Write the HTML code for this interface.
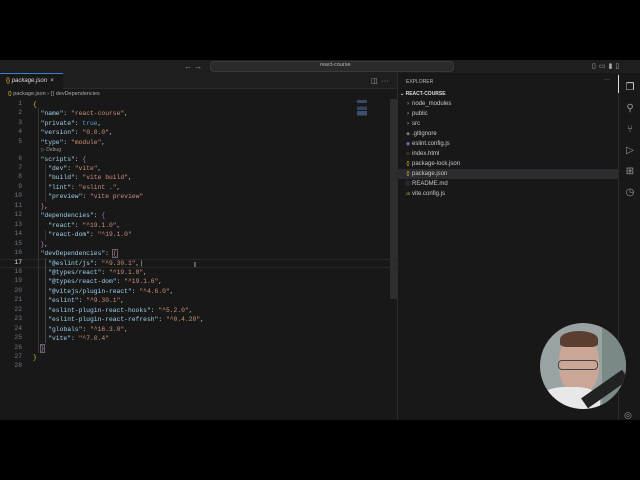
<!DOCTYPE html>
<html><head><meta charset="utf-8"><style>
*{margin:0;padding:0;box-sizing:border-box}
body{width:640px;height:480px;background:#000;position:relative;overflow:hidden;font-family:"Liberation Sans",sans-serif}
.abs{position:absolute}
.code{font-family:"Liberation Mono",monospace;font-size:6.33px;white-space:pre;color:#cccccc}
.k{color:#9fd0ea}.s{color:#ce9178}.b{color:#569cd6}.y{color:#e2c540}.p{color:#d070d0}
.ln{position:absolute;left:0;width:22px;text-align:right;font-family:"Liberation Mono",monospace;font-size:6.33px;color:#6e7681}
.row{position:absolute;left:33px;height:9.45px;line-height:9.45px}
.side{font-size:6px;color:#c8c8c8;position:absolute;left:412px;height:10px;line-height:10px}
.ic{position:absolute;left:405px;width:6px;height:10px;line-height:10px;font-size:5px;text-align:center}
</style></head><body>
<!-- title bar -->
<div class="abs" style="left:0;top:60px;width:640px;height:13px;background:#1e1e1e"></div>
<div class="abs" style="left:184px;top:62px;font-size:8px;color:#999">←&nbsp;→</div>
<div class="abs" style="left:210px;top:61px;width:244px;height:11px;background:#2a2a2a;border:1px solid #3a3a3a;border-radius:4px"></div>
<div class="abs" style="left:320px;top:62px;font-size:5.5px;color:#bbb">react-course</div>
<div class="abs" style="left:592px;top:62px;font-size:7px;color:#aaa;letter-spacing:3px">▯▭▮▯</div>
<!-- editor -->
<div class="abs" style="left:0;top:73px;width:397px;height:347px;background:#181818"></div>
<div class="abs" style="left:0;top:73px;width:397px;height:16px;background:#1e1e1e;border-bottom:1px solid #2a2a2a"></div>
<div class="abs" style="left:0;top:73px;width:63px;height:17px;background:#181818;border-top:1px solid #3b7fd4"></div>
<div class="abs" style="left:6px;top:78px;font-size:6px;color:#ddd"><span class="y">{}</span> <i>package.json</i> &nbsp;×</div>
<div class="abs" style="left:371px;top:77px;font-size:7px;color:#aaa">◫ &nbsp;···</div>
<div class="abs" style="left:8px;top:91px;font-size:5.5px;color:#aaa"><span class="y">{}</span> package.json › {} devDependencies</div>
<div class="abs" style="left:357px;top:100px;width:10px;height:18px;background:linear-gradient(#3a4a66 0 18%,transparent 18% 35%,#34445e 35% 55%,transparent 55% 62%,#3e5070 62% 85%,transparent 85%)"></div>
<div class="abs" style="left:390px;top:99px;width:7px;height:200px;background:#2e2e2e"></div>
<div class="abs" style="left:0;top:259px;width:397px;height:9px;border-top:1px solid #282828;border-bottom:1px solid #282828"></div>
<div class="abs" style="left:38px;top:108px;width:1px;height:245px;background:#333"></div>
<div class="abs" style="left:45px;top:164px;width:1px;height:38px;background:#333"></div>
<div class="abs" style="left:45px;top:230px;width:1px;height:10px;background:#333"></div>
<div class="abs" style="left:45px;top:258px;width:1px;height:85px;background:#444"></div>
<div class="code">
<div class="ln" style="top:99.8px">1</div><div class="row" style="top:99.8px"><span class="y">{</span></div>
<div class="ln" style="top:109.3px">2</div><div class="row" style="top:109.3px">  <span class="k">"name"</span>: <span class="s">"react-course"</span>,</div>
<div class="ln" style="top:118.7px">3</div><div class="row" style="top:118.7px">  <span class="k">"private"</span>: <span class="b">true</span>,</div>
<div class="ln" style="top:128.2px">4</div><div class="row" style="top:128.2px">  <span class="k">"version"</span>: <span class="s">"0.0.0"</span>,</div>
<div class="ln" style="top:137.6px">5</div><div class="row" style="top:137.6px">  <span class="k">"type"</span>: <span class="s">"module"</span>,</div>
<div class="row" style="top:146px;left:41px;font-family:'Liberation Sans',sans-serif;font-size:5px;color:#999">▷ Debug</div>
<div class="ln" style="top:154.5px">6</div><div class="row" style="top:154.5px">  <span class="k">"scripts"</span>: <span class="p">{</span></div>
<div class="ln" style="top:164px">7</div><div class="row" style="top:164px">    <span class="k">"dev"</span>: <span class="s">"vite"</span>,</div>
<div class="ln" style="top:173.4px">8</div><div class="row" style="top:173.4px">    <span class="k">"build"</span>: <span class="s">"vite build"</span>,</div>
<div class="ln" style="top:182.9px">9</div><div class="row" style="top:182.9px">    <span class="k">"lint"</span>: <span class="s">"eslint ."</span>,</div>
<div class="ln" style="top:192.3px">10</div><div class="row" style="top:192.3px">    <span class="k">"preview"</span>: <span class="s">"vite preview"</span></div>
<div class="ln" style="top:201.8px">11</div><div class="row" style="top:201.8px">  <span class="p">}</span>,</div>
<div class="ln" style="top:211.2px">12</div><div class="row" style="top:211.2px">  <span class="k">"dependencies"</span>: <span class="p">{</span></div>
<div class="ln" style="top:220.7px">13</div><div class="row" style="top:220.7px">    <span class="k">"react"</span>: <span class="s">"^19.1.0"</span>,</div>
<div class="ln" style="top:230.1px">14</div><div class="row" style="top:230.1px">    <span class="k">"react-dom"</span>: <span class="s">"^19.1.0"</span></div>
<div class="ln" style="top:239.6px">15</div><div class="row" style="top:239.6px">  <span class="p">}</span>,</div>
<div class="ln" style="top:249px">16</div><div class="row" style="top:249px">  <span class="k">"devDependencies"</span>: <span class="p" style="outline:1px solid #666">{</span></div>
<div class="ln" style="top:258.5px;color:#ddd">17</div><div class="row" style="top:258.5px">    <span class="k">"@eslint/js"</span>: <span class="s">"^9.30.1"</span>,|</div>
<div class="ln" style="top:267.9px">18</div><div class="row" style="top:267.9px">    <span class="k">"@types/react"</span>: <span class="s">"^19.1.8"</span>,</div>
<div class="ln" style="top:277.4px">19</div><div class="row" style="top:277.4px">    <span class="k">"@types/react-dom"</span>: <span class="s">"^19.1.6"</span>,</div>
<div class="ln" style="top:286.8px">20</div><div class="row" style="top:286.8px">    <span class="k">"@vitejs/plugin-react"</span>: <span class="s">"^4.6.0"</span>,</div>
<div class="ln" style="top:296.3px">21</div><div class="row" style="top:296.3px">    <span class="k">"eslint"</span>: <span class="s">"^9.30.1"</span>,</div>
<div class="ln" style="top:305.7px">22</div><div class="row" style="top:305.7px">    <span class="k">"eslint-plugin-react-hooks"</span>: <span class="s">"^5.2.0"</span>,</div>
<div class="ln" style="top:315.2px">23</div><div class="row" style="top:315.2px">    <span class="k">"eslint-plugin-react-refresh"</span>: <span class="s">"^0.4.20"</span>,</div>
<div class="ln" style="top:324.6px">24</div><div class="row" style="top:324.6px">    <span class="k">"globals"</span>: <span class="s">"^16.3.0"</span>,</div>
<div class="ln" style="top:334.1px">25</div><div class="row" style="top:334.1px">    <span class="k">"vite"</span>: <span class="s">"^7.0.4"</span></div>
<div class="ln" style="top:343.5px">26</div><div class="row" style="top:343.5px">  <span class="p" style="outline:1px solid #666">}</span></div>
<div class="ln" style="top:353px">27</div><div class="row" style="top:353px"><span class="y">}</span></div>
<div class="ln" style="top:362.4px">28</div>
</div>
<div class="abs" style="left:194px;top:262px;font-size:7px;color:#ddd">I</div>
<!-- sidebar -->
<div class="abs" style="left:397px;top:73px;width:221px;height:347px;background:#181818;border-left:1px solid #2b2b2b"></div>
<div class="abs" style="left:406px;top:79px;font-size:5px;color:#bbb">EXPLORER</div>
<div class="abs" style="left:604px;top:77px;font-size:6px;color:#aaa">···</div>
<div class="abs" style="left:400px;top:91px;font-size:5px;color:#ddd;font-weight:bold">⌄ REACT-COURSE</div>
<div class="abs" style="left:398px;top:169px;width:220px;height:10px;background:#2c2c2e"></div>
<div class="ic" style="top:99px;color:#aaa;font-size:6px">›</div><div class="side" style="top:99px">node_modules</div>
<div class="ic" style="top:109px;color:#aaa;font-size:6px">›</div><div class="side" style="top:109px">public</div>
<div class="ic" style="top:119px;color:#aaa;font-size:6px">›</div><div class="side" style="top:119px">src</div>
<div class="ic" style="top:129px;color:#777">◆</div><div class="side" style="top:129px">.gitignore</div>
<div class="ic" style="top:139px;color:#8a6ad0">◉</div><div class="side" style="top:139px">eslint.config.js</div>
<div class="ic" style="top:149px;color:#e07040">‹›</div><div class="side" style="top:149px">index.html</div>
<div class="ic" style="top:159px;color:#d0c040">{}</div><div class="side" style="top:159px">package-lock.json</div>
<div class="ic" style="top:169px;color:#d0c040">{}</div><div class="side" style="top:169px">package.json</div>
<div class="ic" style="top:179px;color:#60a0d0">ⓘ</div><div class="side" style="top:179px">README.md</div>
<div class="ic" style="top:189px;color:#d0c040;font-size:4px">JS</div><div class="side" style="top:189px">vite.config.js</div>
<!-- activity bar -->
<div class="abs" style="left:618px;top:73px;width:22px;height:347px;background:#181818;border-left:1px solid #2b2b2b"></div>
<div class="abs" style="left:618px;top:75px;width:1px;height:18px;background:#ddd"></div>
<div class="abs" style="left:623px;top:77px;font-size:10px;color:#ddd;line-height:21px;width:14px;text-align:center">❐<br><span style="color:#999">⚲</span><br><span style="color:#999">⑂</span><br><span style="color:#999">▷</span><br><span style="color:#999">⊞</span><br><span style="color:#999">◷</span></div>
<div class="abs" style="left:624px;top:410px;font-size:9px;color:#999">◎</div>
<!-- webcam -->
<div class="abs" style="left:540px;top:323px;width:86px;height:86px;border-radius:50%;overflow:hidden;background:#9aa3a3">
 <div class="abs" style="left:62px;top:0;width:24px;height:86px;background:#7b8888"></div>
 <div class="abs" style="left:19px;top:11px;width:40px;height:60px;border-radius:45%;background:#c9a696"></div>
 <div class="abs" style="left:20px;top:8px;width:38px;height:16px;border-radius:50% 50% 20% 20%;background:#5a3e30"></div>
 <div class="abs" style="left:18px;top:37px;width:40px;height:10px;border:1.5px solid #444;border-radius:4px"></div>
 <div class="abs" style="left:0;top:64px;width:60px;height:30px;background:#e8e8e8;border-radius:40% 40% 0 0"></div>
 <div class="abs" style="left:40px;top:60px;width:50px;height:12px;background:#222;transform:rotate(-35deg)"></div>
</div>
</body></html>
